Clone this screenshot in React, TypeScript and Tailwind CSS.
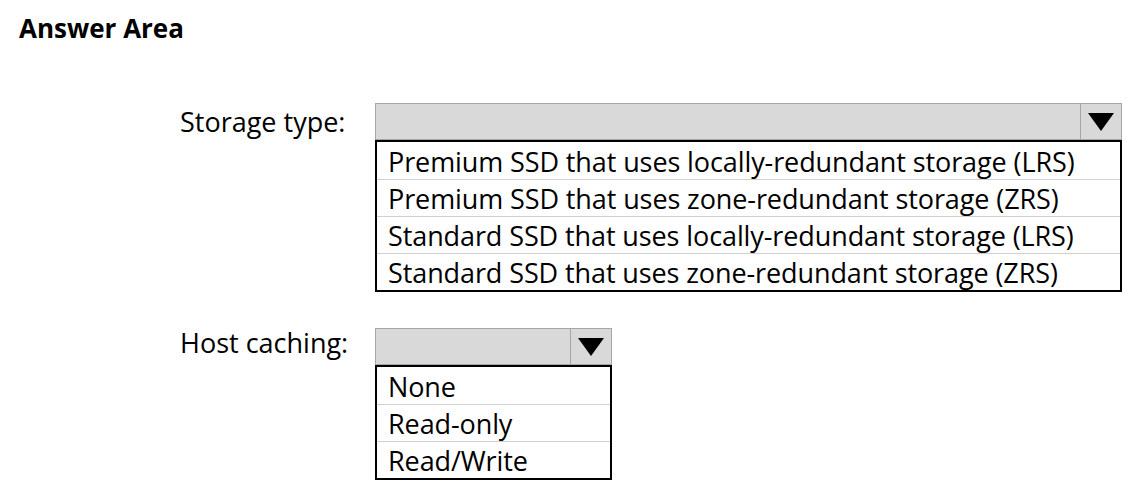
import React from "react";

type Field = {
  label: string;
  labelClass: string;
  width: string;
  options: string[];
};

const fields: Field[] = [
  {
    label: "Storage type:",
    labelClass: "mt-0",
    width: "w-[747px]",
    options: [
      "Premium SSD that uses locally-redundant storage (LRS)",
      "Premium SSD that uses zone-redundant storage (ZRS)",
      "Standard SSD that uses locally-redundant storage (LRS)",
      "Standard SSD that uses zone-redundant storage (ZRS)",
    ],
  },
  {
    label: "Host caching:",
    labelClass: "-mt-[4px]",
    width: "w-[237px]",
    options: ["None", "Read-only", "Read/Write"],
  },
];

function Caret() {
  return (
    <svg width="26" height="18" viewBox="0 0 26 18">
      <polygon points="0,0 26,0 13,18" fill="#000" />
    </svg>
  );
}

function DropList({ field }: { field: Field }) {
  return (
    <div className={field.width}>
      {/* closed select bar */}
      <div className="flex h-[37px] border border-[#a6a6a6] bg-[#d9d9d9]">
        <div className="flex-1" />
        <div className="flex w-[41px] items-center justify-center border-l border-[#a6a6a6]">
          <Caret />
        </div>
      </div>
      {/* option list */}
      <div className="border-2 border-black bg-white">
        {field.options.map((opt, i) => (
          <div
            key={opt}
            className={`flex h-[37px] items-center px-[11px] pt-[1px] text-[27px] leading-none tracking-[-0.1px] text-black ${
              i > 0 ? "border-t border-[#d0d0d0]" : ""
            }`}
          >
            {opt}
          </div>
        ))}
      </div>
    </div>
  );
}

export default function App() {
  return (
    <div
      className="h-[504px] w-[1145px] overflow-hidden bg-white pl-[19px] pt-[12px] text-black"
      style={{ fontFamily: '"Open Sans", "Noto Sans", sans-serif' }}
    >
      <h1 className="text-[26px] font-bold leading-[32px]">Answer Area</h1>

      <div className="ml-[161px] mt-[59px] flex flex-col gap-[36px]">
        {fields.map((f) => (
          <div key={f.label} className="flex items-start">
            <div className={`w-[195px] text-[27px] leading-[37px] ${f.labelClass}`}>{f.label}</div>
            <DropList field={f} />
          </div>
        ))}
      </div>
    </div>
  );
}
